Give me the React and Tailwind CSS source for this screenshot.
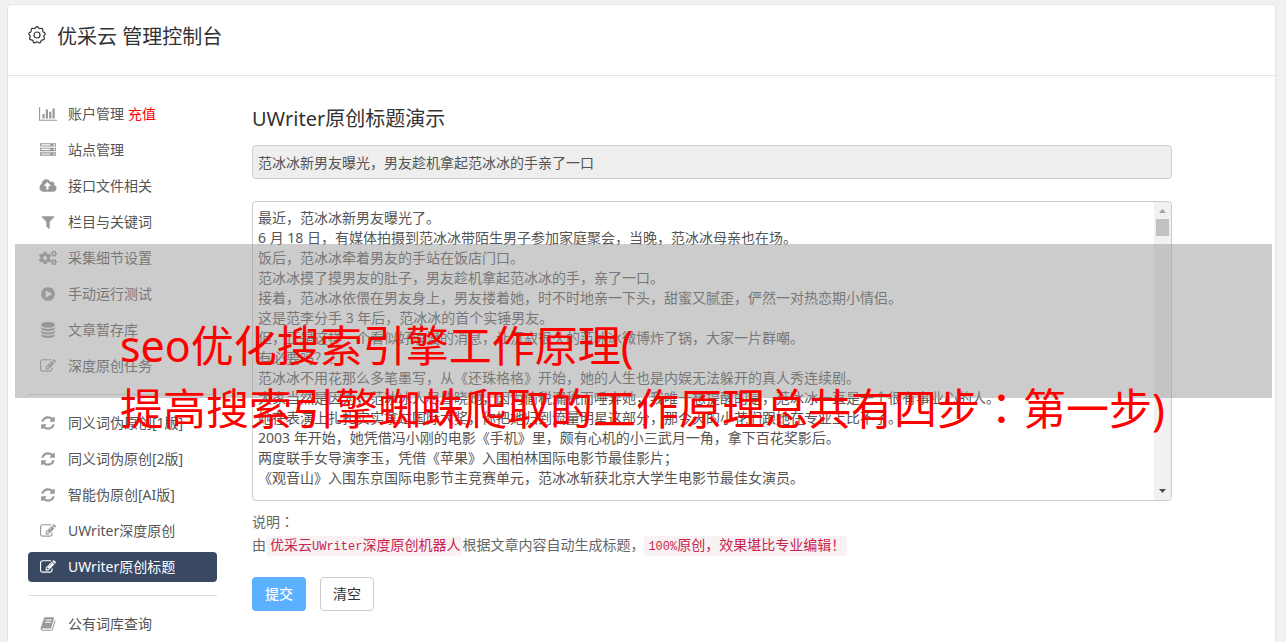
import clsx from 'clsx'
import { FaCogs } from 'react-icons/fa'

const ICONS = {
  chart: {
    box: '0 0 2048 1792',
    d: 'M640 896v512h-256v-512h256zM1024 384v1024h-256v-1024h256zM2048 1536v128h-2048v-1536h128v1408h1920zM1408 640v768h-256v-768h256zM1792 256v1152h-256v-1152h256z',
  },
  server: {
    box: '0 0 1792 1792',
    d: 'M128 1408h1024v-128h-1024v128zm0-512h1024v-128h-1024v128zm1568 448q0-40-28-68t-68-28-68 28-28 68 28 68 68 28 68-28 28-68zm-1568-960h1024v-128h-1024v128zm1568 448q0-40-28-68t-68-28-68 28-28 68 28 68 68 28 68-28 28-68zm0-512q0-40-28-68t-68-28-68 28-28 68 28 68 68 28 68-28 28-68zm96 832v384h-1792v-384h1792zm0-512v384h-1792v-384h1792zm0-512v384h-1792v-384h1792z',
  },
  upload: {
    box: '0 0 1920 1792',
    d: 'M1280 864q0-14-9-23l-352-352q-9-9-23-9t-23 9l-351 351q-10 12-10 24 0 14 9 23t23 9h224v352q0 13 9.5 22.5t22.5 9.5h192q13 0 22.5-9.5t9.5-22.5v-352h224q13 0 22.5-9.5t9.5-22.5zm640 288q0 159-112.5 271.5t-271.5 112.5h-1088q-185 0-316.5-131.5t-131.5-316.5q0-130 70-240t188-165q-2-30-2-43 0-212 150-362t362-150q156 0 285.5 87t188.5 231q71-62 166-62 106 0 181 75t75 181q0 76-41 138 130 31 213.5 135.5t83.5 238.5z',
  },
  filter: {
    box: '0 0 1792 1792',
    d: 'M1595 295q17 41-14 70l-493 493v742q0 42-39 59-13 5-25 5-27 0-45-19l-256-256q-19-19-19-45v-486l-493-493q-31-29-14-70 17-39 59-39h1280q42 0 59 39z',
  },
  play: {
    box: '0 0 1792 1792',
    d: 'M896 128q209 0 385.5 103t279.5 279.5 103 385.5-103 385.5-279.5 279.5-385.5 103-385.5-103-279.5-279.5-103-385.5 103-385.5 279.5-279.5 385.5-103zm384 823q32-18 32-55t-32-55l-544-320q-31-19-64-1-32 19-32 56v640q0 37 32 56 16 8 32 8 17 0 32-9z',
  },
  database: {
    box: '0 0 1792 1792',
    d: 'M896 768q237 0 443-43t325-127v170q0 69-103 128t-280 93.5-385 34.5-385-34.5-280-93.5-103-128v-170q119 84 325 127t443 43zm0 768q237 0 443-43t325-127v170q0 69-103 128t-280 93.5-385 34.5-385-34.5-280-93.5-103-128v-170q119 84 325 127t443 43zm0-384q237 0 443-43t325-127v170q0 69-103 128t-280 93.5-385 34.5-385-34.5-280-93.5-103-128v-170q119 84 325 127t443 43zm0-1152q208 0 385 34.5t280 93.5 103 128v128q0 69-103 128t-280 93.5-385 34.5-385-34.5-280-93.5-103-128v-128q0-69 103-128t280-93.5 385-34.5z',
  },
  edit: {
    box: '0 0 1792 1792',
    d: 'M888 1184l116-116-152-152-116 116v56h96v96h56zm440-720q-16-16-33 1l-350 350q-17 17-1 33t33-1l350-350q17-17 1-33zm80 594v190q0 119-84.5 203.5t-203.5 84.5h-832q-119 0-203.5-84.5t-84.5-203.5v-832q0-119 84.5-203.5t203.5-84.5h832q63 0 117 25 15 7 18 23 3 17-9 29l-49 49q-14 14-32 8-23-6-45-6h-832q-66 0-113 47t-47 113v832q0 66 47 113t113 47h832q66 0 113-47t47-113v-126q0-13 9-22l64-64q15-15 35-7t20 29zm-96-738l288 288-672 672h-288v-288zm444 132l-92 92-288-288 92-92q28-28 68-28t68 28l152 152q28 28 28 68t-28 68z',
  },
  refresh: {
    box: '0 0 1792 1792',
    d: 'M1639 1056q0 5-1 7-64 268-268 434.5t-478 166.5q-146 0-282.5-55t-243.5-157l-129 129q-19 19-45 19t-45-19-19-45v-448q0-26 19-45t45-19h448q26 0 45 19t19 45-19 45l-137 137q71 66 161 102t187 36q134 0 250-65t186-179q11-17 53-117 8-23 30-23h192q13 0 22.5 9.5t9.5 22.5zm25-800v448q0 26-19 45t-45 19h-448q-26 0-45-19t-19-45 19-45l138-138q-148-137-349-137-134 0-250 65t-186 179q-11 17-53 117-8 23-30 23h-199q-13 0-22.5-9.5t-9.5-22.5v-7q65-268 270-434.5t480-166.5q146 0 284 55.5t245 156.5l130-129q19-19 45-19t45 19 19 45z',
  },
  book: {
    box: '0 0 1792 1792',
    d: 'M1703 478q40 57 18 129l-275 906q-19 64-76.5 107.5t-122.5 43.5h-923q-77 0-148.5-53.5t-99.5-131.5q-24-67-2-127 0-4 3-27t4-37q1-8-3-21.5t-3-19.5q2-11 8-21t16.5-23.5 16.5-23.5q23-38 45-91.5t30-91.5q3-10 .5-30t-.5-28q3-11 17-28t17-23q21-36 42-92t25-90q1-9-2.5-32t.5-28q4-13 22-30.5t22-22.5q19-26 42.5-84.5t27.5-96.5q1-8-3-25.5t-2-26.5q2-8 9-18t18-23 17-21q8-12 16.5-30.5t15-35 16-36 19.5-32 26.5-23.5 36-11.5 47.5 5.5l-1 3q38-9 51-9h761q74 0 114 56t18 130l-274 906q-36 119-71.5 153.5t-128.5 34.5h-869q-27 0-38 15-11 16-1 43 24 70 144 70h923q29 0 56-15.5t35-41.5l300-987q7-22 5-57 38 15 59 43zm-1064 2q-4 13 2 22.5t20 9.5h608q13 0 25.5-9.5t16.5-22.5l21-64q4-13-2-22.5t-20-9.5h-608q-13 0-25.5 9.5t-16.5 22.5zm-83 256q-4 13 2 22.5t20 9.5h608q13 0 25.5-9.5t16.5-22.5l21-64q4-13-2-22.5t-20-9.5h-608q-13 0-25.5 9.5t-16.5 22.5z',
  },
}

const MENU = [
  [
    { icon: 'chart', label: '账户管理', extra: '充值' },
    { icon: 'server', label: '站点管理' },
    { icon: 'upload', label: '接口文件相关' },
    { icon: 'filter', label: '栏目与关键词' },
    { icon: 'cogs', label: '采集细节设置' },
    { icon: 'play', label: '手动运行测试' },
    { icon: 'database', label: '文章暂存库' },
    { icon: 'edit', label: '深度原创任务' },
  ],
  [
    { icon: 'refresh', label: '同义词伪原创[1版]' },
    { icon: 'refresh', label: '同义词伪原创[2版]' },
    { icon: 'refresh', label: '智能伪原创[AI版]' },
    { icon: 'edit', label: 'UWriter深度原创' },
    { icon: 'edit', label: 'UWriter原创标题', active: true },
  ],
  [{ icon: 'book', label: '公有词库查询' }],
]

const ARTICLE = `最近，范冰冰新男友曝光了。
6 月 18 日，有媒体拍摄到范冰冰带陌生男子参加家庭聚会，当晚，范冰冰母亲也在场。
饭后，范冰冰牵着男友的手站在饭店门口。
范冰冰摸了摸男友的肚子，男友趁机拿起范冰冰的手，亲了一口。
接着，范冰冰依偎在男友身上，男友搂着她，时不时地亲一下头，甜蜜又腻歪，俨然一对热恋期小情侣。
这是范李分手 3 年后，范冰冰的首个实锤男友。
但，正是这样一个看似好浪漫的消息，让沉寂很久的范冰冰微博炸了锅，大家一片群嘲。
有必要吗？？
范冰冰不用花那么多笔墨写，从《还珠格格》开始，她的人生也是内娱无法躲开的真人秀连续剧。
大家当然是因为，范冰冰人尽皆晓她，因为偷税漏税而唾弃她，我唯一想提醒的是，范冰冰一直是一个很有事业心的人。
她在表演上扎扎实实拿过国际大奖，你把她归到流量明星这部分，那今天的小花们跟她在专业上比不了。
2003 年开始，她凭借冯小刚的电影《手机》里，颇有心机的小三武月一角，拿下百花奖影后。
两度联手女导演李玉，凭借《苹果》入围柏林国际电影节最佳影片；
《观音山》入围东京国际电影节主竞赛单元，范冰冰斩获北京大学生电影节最佳女演员。`

// scalloped outline of the header gear, nine rounded teeth
const GEAR_PATH =
  Array.from({ length: 90 }, (_, i) => {
    const a = (i / 90) * Math.PI * 2 - Math.PI / 2
    const r = 7.6 + 0.7 * Math.cos((i / 90) * Math.PI * 18)
    return `${i ? 'L' : 'M'}${(9 + r * Math.cos(a)).toFixed(2)} ${(9 + r * Math.sin(a)).toFixed(2)}`
  }).join('') + 'Z'

function Gear() {
  return (
    <svg viewBox="0 0 18 18" className="mt-[3px] h-[18px] w-[18px]" fill="none" stroke="currentColor" strokeWidth="1.2">
      <path d={GEAR_PATH} />
      <circle cx="9" cy="9" r="3" />
    </svg>
  )
}

function MenuIcon({ name }) {
  if (name === 'cogs') return <FaCogs className="h-4 w-[18px]" />
  const icon = ICONS[name]
  return (
    <svg viewBox={icon.box} className="h-4 w-[18px]" fill="currentColor" aria-hidden="true">
      <path d={icon.d} />
    </svg>
  )
}

function MenuItem({ item }) {
  return (
    <li>
      <a
        href="#"
        className={clsx(
          'flex h-[30px] items-center rounded pl-[11px]',
          item.active ? 'bg-[#394963] text-white' : 'text-[#555]',
        )}
      >
        <span className={clsx('mr-[11px] flex', !item.active && 'text-[#999]')}>
          <MenuIcon name={item.icon} />
        </span>
        {item.label}
        {item.extra && <span className="ml-1 text-[#f00]">{item.extra}</span>}
      </a>
    </li>
  )
}

function Sidebar() {
  return (
    <nav className="w-[189px] shrink-0">
      {MENU.map((group, i) => (
        <ul
          key={i}
          className={clsx('flex flex-col gap-1.5', i > 0 && 'mt-[13px] border-t border-[#ddd] pt-[13px]')}
        >
          {group.map((item) => (
            <MenuItem key={item.label} item={item} />
          ))}
        </ul>
      ))}
    </nav>
  )
}

function Scrollbar() {
  return (
    <div className="flex w-[17px] shrink-0 flex-col items-center rounded-r bg-[#f1f1f1]" aria-hidden="true">
      <svg viewBox="0 0 17 17" className="h-[17px] w-[17px]">
        <path d="M5 11h7L8.500 7z" fill="#a3a3a3" />
      </svg>
      <div className="h-[17px] w-[13px] bg-[#c1c1c1]" />
      <svg viewBox="0 0 17 17" className="mt-auto h-[17px] w-[17px]">
        <path d="M5 6h7L8.500 10z" fill="#505050" />
      </svg>
    </div>
  )
}

// full-width colon set in the middle of its cell
function Colon() {
  return (
    <span lang="zh-TW" className="font-['Noto_Sans_CJK_TC',sans-serif]">
      ：
    </span>
  )
}

function Code({ children }) {
  return (
    <code className="rounded bg-[#f9f2f4] py-0.5 pr-0.5 pl-1 font-['Liberation_Mono','Noto_Sans_CJK_SC',monospace] text-sm leading-none text-[#c7254e]">
      {children}
    </code>
  )
}

function TitleForm() {
  return (
    <form className="max-w-[920px] min-w-0 flex-1" onSubmit={(e) => e.preventDefault()}>
      <h2 className="mt-1.5 text-xl leading-7 text-[#333]">UWriter原创标题演示</h2>
      <input
        type="text"
        readOnly
        aria-label="标题"
        defaultValue="范冰冰新男友曝光，男友趁机拿起范冰冰的手亲了一口"
        className="mt-3 block h-[34px] w-full rounded border border-[#ccc] bg-[#eee] px-[5px] text-[#555] outline-none"
      />
      <div className="mt-[22px] flex h-[300px] rounded border border-[#ccc] bg-white">
        <textarea
          aria-label="文章内容"
          defaultValue={ARTICLE}
          className="min-w-0 flex-1 resize-none overflow-hidden px-[5px] py-1.5 leading-5 text-[#555] outline-none"
        />
        <Scrollbar />
      </div>
      <p className="mt-[9px] leading-[23px] text-[#666]">
        说明
        <Colon />
        <br />
        由
        <Code>
          优采云<span className="text-xs">UWriter</span>深度原创机器人
        </Code>
        根据文章内容自动生成标题，
        <Code>
          <span className="text-xs">100%</span>原创，效果堪比专业编辑！
        </Code>
      </p>
      <div className="mt-[21px] flex gap-3.5">
        <button type="submit" className="h-[34px] w-[54px] rounded bg-[#5bb0ff] font-medium text-white">
          提交
        </button>
        <button type="reset" className="h-[34px] w-[54px] rounded border border-[#ccc] bg-white text-[#333]">
          清空
        </button>
      </div>
    </form>
  )
}

function Banner() {
  return (
    <div className="pointer-events-none absolute top-[244px] right-3.5 left-[15px] h-[154px] bg-[#999]/50">
      <p className="mt-[72px] ml-[105px] text-[43px] leading-[60px] whitespace-nowrap text-[#f00]">
        seo优化搜索引擎工作原理(
        <br />
        提高搜索引擎蜘蛛爬取的工作原理总共有四步
        <Colon />
        第一步)
      </p>
    </div>
  )
}

export default function App() {
  return (
    <div
      lang="zh-CN"
      className="relative min-h-screen bg-[#f1f1f1] pt-1 pr-2.5 pl-[7px] font-['Noto_Sans','Noto_Sans_CJK_SC',sans-serif] text-sm"
    >
      <div className="rounded-t border border-[#e4e4e4] bg-white">
        <header className="flex h-[71px] items-start gap-[11px] border-b border-[#e4e4e4] px-5 pt-[18px] text-[#333]">
          <Gear />
          <h1 className="text-xl leading-7">优采云 管理控制台</h1>
        </header>
        <div className="flex gap-[35px] px-5 pt-[23px] pb-8">
          <Sidebar />
          <TitleForm />
        </div>
      </div>
      <Banner />
    </div>
  )
}
